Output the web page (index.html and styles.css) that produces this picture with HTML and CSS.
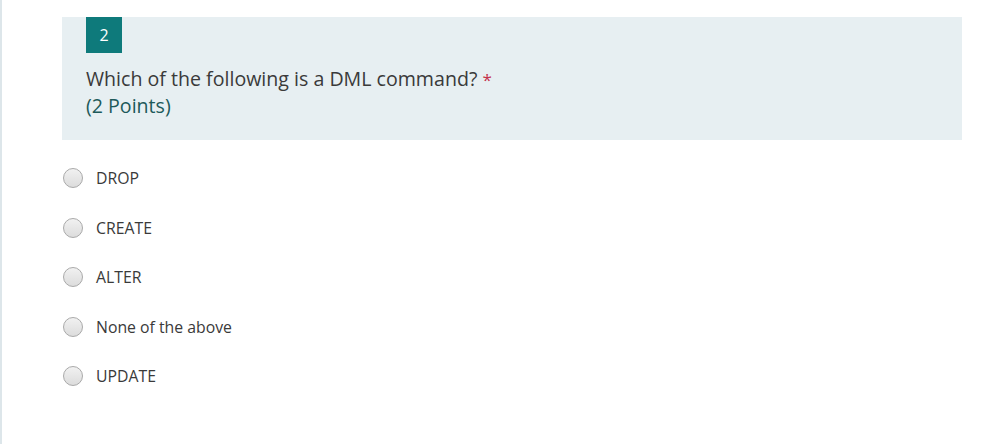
FILE: index.html
```html
<!DOCTYPE html>
<html>
<head>
<meta charset="utf-8">
<link rel="stylesheet" href="styles.css">
</head>
<body>
<div class="page">
  <div class="rail"></div>
  <div class="content">
    <div class="question">
      <div class="badge">2</div>
      <div class="title">Which of the following is a DML command? <span class="req">*</span></div>
      <div class="points">(2 Points)</div>
    </div>
    <div class="options">
      <label class="opt"><span class="radio"></span><span class="lbl">DROP</span></label>
      <label class="opt"><span class="radio"></span><span class="lbl">CREATE</span></label>
      <label class="opt"><span class="radio"></span><span class="lbl">ALTER</span></label>
      <label class="opt"><span class="radio"></span><span class="lbl">None of the above</span></label>
      <label class="opt"><span class="radio"></span><span class="lbl">UPDATE</span></label>
    </div>
  </div>
</div>
</body>
</html>
```
FILE: styles.css
```css
html, body {
  margin: 0;
  padding: 0;
  background: #fff;
}
.page {
  display: flex;
  height: 444px;
  font-family: "Open Sans", "Noto Sans", sans-serif;
}
.rail {
  width: 2px;
  background: #dde6ea;
  flex: none;
}
.content {
  flex: 1;
  padding: 17px 39px 0 60px;
}
.question {
  background: #e7eff2;
  padding: 0 24px 24px 24px;
  height: 99px;
}
.badge {
  width: 36px;
  height: 36px;
  background: #0e7a7b;
  color: #fff;
  font-size: 16px;
  display: flex;
  align-items: center;
  justify-content: center;
}
.title {
  margin-top: 13px;
  font-size: 19.6px;
  color: #3a3a3a;
  line-height: 26px;
}
.req {
  color: #c4314b;
  font-size: 17px;
}
.points {
  font-size: 19.6px;
  color: #1d5a5a;
  line-height: 26px;
}
.options {
  display: flex;
  flex-direction: column;
  gap: 27.6px;
  padding-top: 27px;
}
.opt {
  display: flex;
  align-items: center;
  height: 22px;
}
.radio {
  width: 20px;
  height: 20px;
  border-radius: 50%;
  border: 1px solid #a9a9a9;
  background: linear-gradient(#f1f1f1, #dcdcdc);
  box-sizing: border-box;
  margin-left: 1px;
  flex: none;
}
.lbl {
  margin-left: 13px;
  font-size: 15.8px;
  color: #3a3a3a;
}
```
